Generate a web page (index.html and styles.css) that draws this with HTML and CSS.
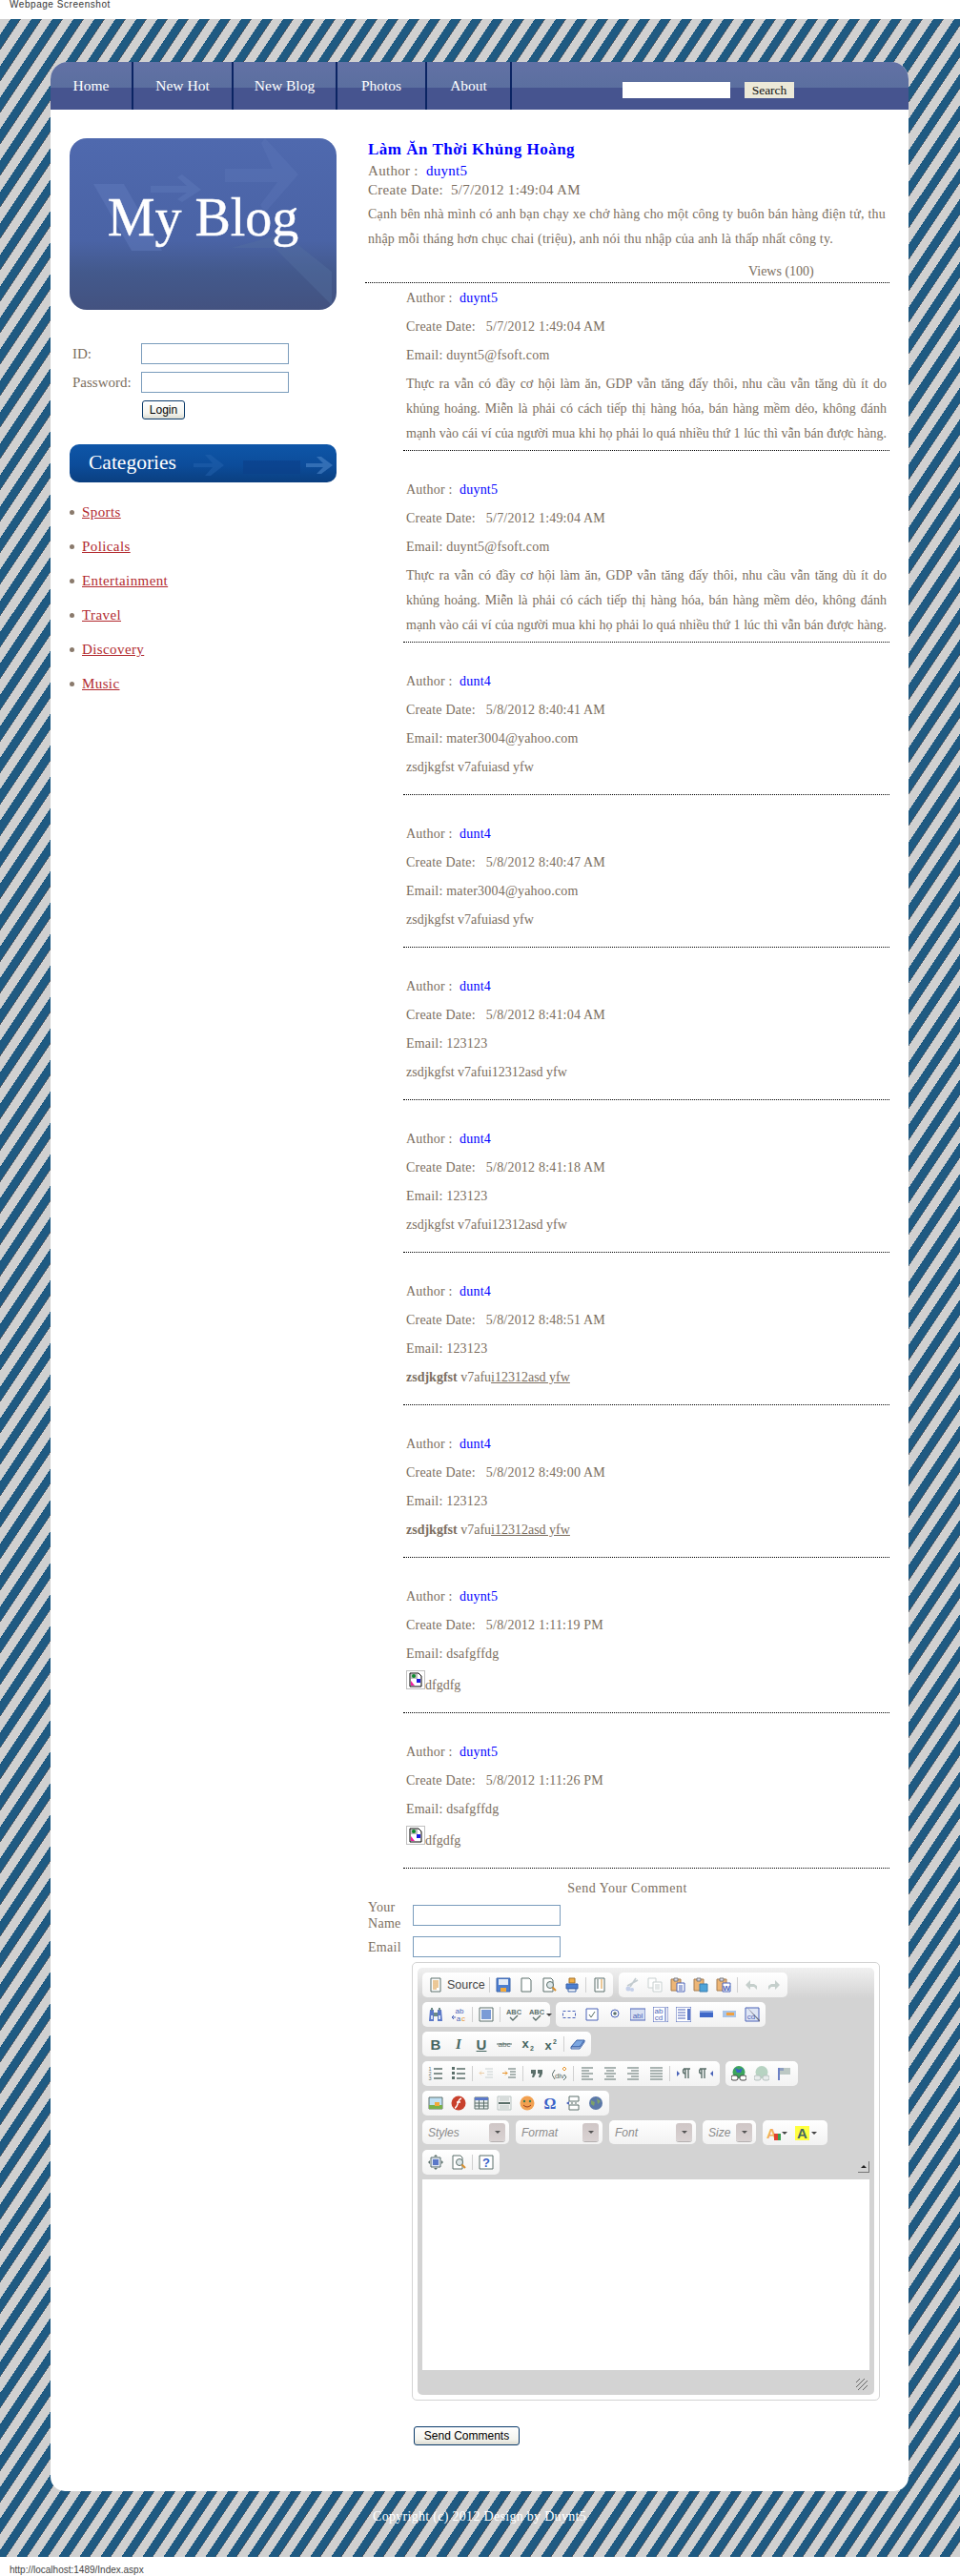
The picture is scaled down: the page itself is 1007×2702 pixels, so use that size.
FILE: index.html
```html
<!DOCTYPE html>
<html lang="vi">
<head>
  <meta charset="UTF-8">
  <title>My Blog</title>
  <link rel="stylesheet" href="styles.css">
</head>
<body>
  <svg class="defs" width="0" height="0">
    <symbol id="i-doc" viewBox="0 0 16 16"><path d="M3 1h10v14H3z" fill="#fff" stroke="#5b6f6a"/><path d="M5 4h6M5 6h6M5 8h6M5 10h6M5 12h4" stroke="#d8902f"/></symbol>
    <symbol id="i-save" viewBox="0 0 16 16"><path d="M1 1h14v14H1z" fill="#4d7fd0" stroke="#3a62a8"/><path d="M3 2h10v6H3z" fill="#e4ecf7"/><path d="M5 11h6v4H5z" fill="#f2a93a"/></symbol>
    <symbol id="i-new" viewBox="0 0 16 16"><path d="M3 1h8l2 2v12H3z" fill="#fff" stroke="#5b6f6a"/></symbol>
    <symbol id="i-preview" viewBox="0 0 16 16"><path d="M2 1h8l2 2v12H2z" fill="#fff" stroke="#5b6f6a"/><circle cx="9" cy="8" r="3.5" fill="#dce6e8" stroke="#5b6f6a"/><path d="M11.5 10.5l3.5 3.5" stroke="#d8902f" stroke-width="2"/></symbol>
    <symbol id="i-print" viewBox="0 0 16 16"><path d="M5 1h6v5H5z" fill="#f2b04a" stroke="#a0702a"/><path d="M2 7h12v5H2z" fill="#4d7fd0" stroke="#3a62a8"/><path d="M4 12h8v3H4z" fill="#fff" stroke="#3a62a8"/></symbol>
    <symbol id="i-tpl" viewBox="0 0 16 16"><path d="M3 1h10v14H3z" fill="#fff" stroke="#5b6f6a"/><path d="M9 3h2M9 5h2M9 7h2M9 9h2M9 11h2" stroke="#d8902f"/><path d="M5 3h2M5 5h2M5 7h2M5 9h2M5 11h2" stroke="#5b6f6a"/></symbol>
    <symbol id="i-cut" viewBox="0 0 16 16"><path d="M12 1L6 10M14 3L3 9" stroke="#c3ccd0" stroke-width="1.6" fill="none"/><circle cx="4" cy="12" r="2.5" fill="#c5d0ea"/><circle cx="8" cy="13" r="2" fill="#c5d0ea"/></symbol>
    <symbol id="i-copy" viewBox="0 0 16 16"><path d="M1 1h8v10H1z" fill="#fff" stroke="#c8d0d0"/><path d="M6 5h9v10H6z" fill="#fff" stroke="#c8d0d0"/><path d="M8 8h5M8 10h5M8 12h5" stroke="#c8d0d0"/></symbol>
    <symbol id="i-paste" viewBox="0 0 16 16"><path d="M1 2h10v12H1z" fill="#eeb676" stroke="#a57d50"/><path d="M4 1h4v3H4z" fill="#dde" stroke="#777"/><path d="M7 6h8v9H7z" fill="#fff" stroke="#4a63b8"/><path d="M9 9h4M9 11h4M9 13h4" stroke="#4a63b8"/></symbol>
    <symbol id="i-pastetext" viewBox="0 0 16 16"><path d="M1 2h10v12H1z" fill="#eeb676" stroke="#a57d50"/><path d="M4 1h4v3H4z" fill="#dde" stroke="#777"/><path d="M7 7h8v8H7z" fill="#4da3d8" stroke="#3b7fb0"/></symbol>
    <symbol id="i-undo" viewBox="0 0 16 16"><path d="M7 3L2 8l5 5V10h4l3 3V9l-3-2H7z" fill="#c5cfcc"/></symbol>
    <symbol id="i-redo" viewBox="0 0 16 16"><path d="M9 3l5 5-5 5V10H5l-3 3V9l3-2h4z" fill="#c5cfcc"/></symbol>
    <symbol id="i-find" viewBox="0 0 16 16"><path d="M2 3h4v12H1zM10 3h4l1 12h-5z" fill="#5b78c8"/><path d="M3 1h2v3H3zM11 1h2v3h-2zM6 6h4v4H6z" fill="#6d8a85"/><path d="M3 9h2v4H3zM11 9h2v4h-2z" fill="#d7e2f5"/></symbol>
    <symbol id="i-selall" viewBox="0 0 16 16"><path d="M1 1h14v14H1z" fill="#fff" stroke="#5b6f6a"/><path d="M3 3h10v10H3z" fill="#7b9bd6"/></symbol>
    <symbol id="i-form" viewBox="0 0 16 16"><path d="M1.5 4.5h13v7h-13z" fill="none" stroke="#4a63b8" stroke-dasharray="3 2"/></symbol>
    <symbol id="i-check" viewBox="0 0 16 16"><path d="M2 2h12v12H2z" fill="#fff" stroke="#4a63b8"/><path d="M5 8l2 3 4-6" stroke="#5b6f6a" fill="none"/></symbol>
    <symbol id="i-radio" viewBox="0 0 16 16"><circle cx="8" cy="7" r="4" fill="#fff" stroke="#4a63b8"/><circle cx="8" cy="7" r="1.8" fill="#5b6f6a"/></symbol>
    <symbol id="i-sel" viewBox="0 0 16 16"><path d="M0 0h16v16H0z" fill="#fff" stroke="#4a63b8"/><path d="M2 3h8M2 6h8M2 9h8M2 12h8" stroke="#4a63b8"/><path d="M12 2h3v12h-3z" fill="#5b78c8"/></symbol>
    <symbol id="i-btn" viewBox="0 0 16 16"><path d="M1 4h14v7H1z" fill="#3f68c8"/><path d="M1 4h14v2H1z" fill="#89a6e0"/></symbol>
    <symbol id="i-imgbtn" viewBox="0 0 16 16"><path d="M1 4h14v7H1z" fill="#a9c5e8"/><path d="M5 6h8v3H5z" fill="#f0a040"/></symbol>
    <symbol id="i-erase" viewBox="0 0 16 16"><path d="M1 11l6-7h8l-5 7z" fill="#7ba6e0" stroke="#3a62a8"/><path d="M1 11h9l5-7v2l-5 7H1z" fill="#c9d8f0" stroke="#3a62a8"/></symbol>
    <symbol id="i-ul" viewBox="0 0 16 16"><path d="M6 3h9M6 8h9M6 13h9" stroke="#5b6f6a" stroke-width="1.3"/><path d="M1 1h3v3H1zM1 6h3v3H1zM1 11h3v3H1z" fill="#5b6f6a"/></symbol>
    <symbol id="i-out" viewBox="0 0 16 16"><path d="M7 3h8M9 6h6M9 9h6M7 12h8" stroke="#c8d0d0"/><path d="M1 7.5h5M1 7.5l2-2M1 7.5l2 2" stroke="#eccfa8" fill="none"/></symbol>
    <symbol id="i-in" viewBox="0 0 16 16"><path d="M7 3h8M9 6h6M9 9h6M7 12h8" stroke="#5b6f6a"/><path d="M1 7.5h5M6 7.5l-2-2M6 7.5l-2 2" stroke="#e8962e" fill="none"/></symbol>
    <symbol id="i-quote" viewBox="0 0 16 16"><path d="M2 4h5v4l-2 4H3l1-4H2zM9 4h5v4l-2 4h-2l1-4H9z" fill="#5b6f6a"/></symbol>
    <symbol id="i-left" viewBox="0 0 16 16"><path d="M2 2h12M2 5h8M2 8h12M2 11h8M2 14h12" stroke="#5b6f6a" stroke-width="1.2"/></symbol>
    <symbol id="i-center" viewBox="0 0 16 16"><path d="M2 2h12M4 5h8M2 8h12M4 11h8M2 14h12" stroke="#5b6f6a" stroke-width="1.2"/></symbol>
    <symbol id="i-right" viewBox="0 0 16 16"><path d="M2 2h12M6 5h8M2 8h12M6 11h8M2 14h12" stroke="#5b6f6a" stroke-width="1.2"/></symbol>
    <symbol id="i-just" viewBox="0 0 16 16"><path d="M2 2h13M2 5h13M2 8h13M2 11h13M2 14h13" stroke="#5b6f6a" stroke-width="1.2"/></symbol>
    <symbol id="i-ltr" viewBox="0 0 16 16"><path d="M1 5l3 3-3 3z" fill="#4a63b8"/><path d="M8 3h7M10 3a2.5 2.5 0 0 0 0 5M10 3v10M13 3v10" stroke="#5b6f6a" stroke-width="1.4" fill="none"/></symbol>
    <symbol id="i-rtl" viewBox="0 0 16 16"><path d="M15 5l-3 3 3 3z" fill="#4a63b8"/><path d="M1 3h7M3 3a2.5 2.5 0 0 0 0 5M3 3v10M6 3v10" stroke="#5b6f6a" stroke-width="1.4" fill="none"/></symbol>
    <symbol id="i-link" viewBox="0 0 16 16"><circle cx="8" cy="6.5" r="6.5" fill="#3ca55c"/><path d="M4 2l4 2 4-2-2 5H6z" fill="#3a62c8"/><rect x="0" y="10" width="7" height="5" rx="2" fill="#fff" stroke="#444"/><rect x="9" y="10" width="7" height="5" rx="2" fill="#fff" stroke="#444"/></symbol>
    <symbol id="i-unlink" viewBox="0 0 16 16"><circle cx="8" cy="6.5" r="6.5" fill="#b7d3c2"/><rect x="0" y="10" width="7" height="5" rx="2" fill="#e8ecec" stroke="#b5bfbd"/><rect x="9" y="10" width="7" height="5" rx="2" fill="#e8ecec" stroke="#b5bfbd"/></symbol>
    <symbol id="i-flag" viewBox="0 0 16 16"><path d="M2 2v13" stroke="#4a63b8" stroke-width="1.6"/><path d="M3 2h11v7H3z" fill="#bcc8c4"/><path d="M3 2h4v3H3z" fill="#4a63b8" opacity=".4"/></symbol>
    <symbol id="i-img" viewBox="0 0 16 16"><path d="M1 2h14v12H1z" fill="#bfe0f4" stroke="#5b6f6a"/><path d="M1 10h14v4H1z" fill="#78b04a"/><path d="M7 7h5v4H7z" fill="#f2a93a"/></symbol>
    <symbol id="i-flash" viewBox="0 0 16 16"><circle cx="8" cy="8" r="7.5" fill="#c8402c"/><path d="M11 3C8 4 8 6 7 9s-2 4-3 4M6 7h4" stroke="#fff" stroke-width="1.4" fill="none"/></symbol>
    <symbol id="i-table" viewBox="0 0 16 16"><path d="M1 2h14v12H1z" fill="#e8eded" stroke="#5b6f6a"/><path d="M1 2h14v3H1z" fill="#5b78c8"/><path d="M5.5 5v9M10.5 5v9M1 8h14M1 11h14" stroke="#5b6f6a"/></symbol>
    <symbol id="i-hr" viewBox="0 0 16 16"><path d="M1 1h14v14H1z" fill="#f2f2f2" stroke="#b9c4c2"/><path d="M3 3h10M3 5h10M3 11h10M3 13h10" stroke="#bcc6c4"/><path d="M2 8h12" stroke="#5b6f6a" stroke-width="2"/></symbol>
    <symbol id="i-smile" viewBox="0 0 16 16"><circle cx="8" cy="8" r="7.5" fill="#f2a050"/><circle cx="5" cy="6" r="1.2" fill="#3a7a50"/><circle cx="11" cy="6" r="1.2" fill="#3a7a50"/><path d="M4 10q4 4 8 0" stroke="#a04020" fill="none"/></symbol>
    <symbol id="i-break" viewBox="0 0 16 16"><path d="M4 1h10v5H4zM4 10h10v5H4z" fill="#fff" stroke="#5b6f6a"/><path d="M1 8l3-2v4z" fill="#4a63b8"/><path d="M6 8h2M10 8h2" stroke="#5b6f6a"/></symbol>
    <symbol id="i-iframe" viewBox="0 0 16 16"><circle cx="8" cy="8" r="7" fill="#5b78a8"/><path d="M3 5l4 2-1 4-3-2zM9 3l4 3-3 3z" fill="#7da06a"/></symbol>
    <symbol id="i-max" viewBox="0 0 16 16"><path d="M3 3h10v10H3z" fill="#dfe6f5" stroke="#5b6f6a"/><path d="M5 5h6v6H5z" fill="#5b78c8"/><path d="M8 0l2 2H6zM8 16l2-2H6zM0 8l2 2V6zM16 8l-2 2V6z" fill="#5b6f6a"/></symbol>
    <symbol id="i-broken" viewBox="0 0 16 16"><path d="M2 1h9l3 3v11H2z" fill="#fff" stroke="#000"/><path d="M3 2h7v5H3z" fill="#c0c0c0"/><circle cx="6" cy="4" r="2" fill="#0a8a2a"/><path d="M3 9l4 5H3z" fill="#f020a0"/><path d="M9 7h4v4H9z" fill="#1a1ae0"/></symbol>
  </svg>

  <div class="shot-title">Webpage Screenshot</div>

  <div class="stripes">
    <div class="card">
      <div class="nav">
        <ul class="menu">
          <li><a href="#">Home</a></li>
          <li><a href="#">New Hot</a></li>
          <li><a href="#">New Blog</a></li>
          <li><a href="#">Photos</a></li>
          <li><a href="#">About</a></li>
        </ul>
        <div class="search">
          <input type="text" class="search-box">
          <button class="search-btn">Search</button>
        </div>
      </div>

      <div class="columns">
        <div class="sidebar">
          <div class="logo">
            <svg class="logo-art" viewBox="0 0 280 180">
              <path d="M205 0l35 38-35 40-5-8 18-24h-55v-14h50l-12-27z" fill="#5f79bb" opacity=".35"/>
              <path d="M85 50h38l-10-9 5-3 20 16-20 13-5-3 10-7H85z" fill="#5f79bb" opacity=".45"/>
              <path d="M25 48h32l40 70H65z" fill="#5f79bb" opacity=".5"/>
              <path d="M170 115h45l60 60v-35l-50-40z" fill="#56709f" opacity=".4"/>
            </svg>
            <span class="logo-text">My Blog</span>
          </div>

          <div class="login">
            <div class="login-row"><label>ID:</label><input type="text" class="field"></div>
            <div class="login-row"><label>Password:</label><input type="password" class="field"></div>
            <button class="btn login-btn">Login</button>
          </div>

          <div class="cat-head">
            <span>Categories</span>
            <svg class="cat-art" viewBox="0 0 280 40">
              <path d="M130 20h20l-8-9h6l14 11-14 11h-6l8-9h-20z" fill="#2a6ab4" opacity=".4"/>
              <path d="M182 17h60v14h-60z" fill="#0b3f88" opacity=".6"/>
              <path d="M248 20h18l-7-7h5l12 9-12 9h-5l7-7h-18z" fill="#4c86c8" opacity=".6"/>
            </svg>
          </div>
          <ul class="cats">
            <li><a href="#">Sports</a></li>
            <li><a href="#">Policals</a></li>
            <li><a href="#">Entertainment</a></li>
            <li><a href="#">Travel</a></li>
            <li><a href="#">Discovery</a></li>
            <li><a href="#">Music</a></li>
          </ul>
        </div>

        <div class="main">
          <div class="post">
            <h1 class="post-title"><a href="#">Làm Ăn Thời Khủng Hoàng</a></h1>
            <div class="post-meta">Author :&nbsp; <a href="#">duynt5</a></div>
            <div class="post-meta">Create Date:&nbsp; 5/7/2012 1:49:04 AM</div>
            <p class="post-text">Cạnh bên nhà mình có anh bạn chạy xe chở hàng cho một công ty buôn bán hàng điện tử, thu nhập mỗi tháng hơn chục chai (triệu), anh nói thu nhập của anh là thấp nhất công ty.</p>
            <div class="views">Views (100)</div>
          </div>

          <div class="comment first">
            <div class="c-row">Author :&nbsp; <a href="#">duynt5</a></div>
            <div class="c-row">Create Date: &nbsp; 5/7/2012 1:49:04 AM</div>
            <div class="c-row">Email: duynt5@fsoft.com</div>
            <div class="c-text long">Thực ra vẫn có đầy cơ hội làm ăn, GDP vẫn tăng đấy thôi, nhu cầu vẫn tăng dù ít do khủng hoảng. Miễn là phải có cách tiếp thị hàng hóa, bán hàng mềm dẻo, không đánh mạnh vào cái ví của người mua khi họ phải lo quá nhiều thứ 1 lúc thì vẫn bán được hàng.</div>
          </div>
          <div class="comment">
            <div class="c-row">Author :&nbsp; <a href="#">duynt5</a></div>
            <div class="c-row">Create Date: &nbsp; 5/7/2012 1:49:04 AM</div>
            <div class="c-row">Email: duynt5@fsoft.com</div>
            <div class="c-text long">Thực ra vẫn có đầy cơ hội làm ăn, GDP vẫn tăng đấy thôi, nhu cầu vẫn tăng dù ít do khủng hoảng. Miễn là phải có cách tiếp thị hàng hóa, bán hàng mềm dẻo, không đánh mạnh vào cái ví của người mua khi họ phải lo quá nhiều thứ 1 lúc thì vẫn bán được hàng.</div>
          </div>
          <div class="comment">
            <div class="c-row">Author :&nbsp; <a href="#">dunt4</a></div>
            <div class="c-row">Create Date: &nbsp; 5/8/2012 8:40:41 AM</div>
            <div class="c-row">Email: mater3004@yahoo.com</div>
            <div class="c-text">zsdjkgfst v7afuiasd yfw</div>
          </div>
          <div class="comment">
            <div class="c-row">Author :&nbsp; <a href="#">dunt4</a></div>
            <div class="c-row">Create Date: &nbsp; 5/8/2012 8:40:47 AM</div>
            <div class="c-row">Email: mater3004@yahoo.com</div>
            <div class="c-text">zsdjkgfst v7afuiasd yfw</div>
          </div>
          <div class="comment">
            <div class="c-row">Author :&nbsp; <a href="#">dunt4</a></div>
            <div class="c-row">Create Date: &nbsp; 5/8/2012 8:41:04 AM</div>
            <div class="c-row">Email: 123123</div>
            <div class="c-text">zsdjkgfst v7afui12312asd yfw</div>
          </div>
          <div class="comment">
            <div class="c-row">Author :&nbsp; <a href="#">dunt4</a></div>
            <div class="c-row">Create Date: &nbsp; 5/8/2012 8:41:18 AM</div>
            <div class="c-row">Email: 123123</div>
            <div class="c-text">zsdjkgfst v7afui12312asd yfw</div>
          </div>
          <div class="comment">
            <div class="c-row">Author :&nbsp; <a href="#">dunt4</a></div>
            <div class="c-row">Create Date: &nbsp; 5/8/2012 8:48:51 AM</div>
            <div class="c-row">Email: 123123</div>
            <div class="c-text"><b>zsdjkgfst</b> v7afu<u>i12312asd yfw</u></div>
          </div>
          <div class="comment">
            <div class="c-row">Author :&nbsp; <a href="#">dunt4</a></div>
            <div class="c-row">Create Date: &nbsp; 5/8/2012 8:49:00 AM</div>
            <div class="c-row">Email: 123123</div>
            <div class="c-text"><b>zsdjkgfst</b> v7afu<u>i12312asd yfw</u></div>
          </div>
          <div class="comment">
            <div class="c-row">Author :&nbsp; <a href="#">duynt5</a></div>
            <div class="c-row">Create Date: &nbsp; 5/8/2012 1:11:19 PM</div>
            <div class="c-row">Email: dsafgffdg</div>
            <div class="c-pic"><span class="broken"><svg><use href="#i-broken"/></svg></span><span class="pic-caption">dfgdfg</span></div>
          </div>
          <div class="comment">
            <div class="c-row">Author :&nbsp; <a href="#">duynt5</a></div>
            <div class="c-row">Create Date: &nbsp; 5/8/2012 1:11:26 PM</div>
            <div class="c-row">Email: dsafgffdg</div>
            <div class="c-pic"><span class="broken"><svg><use href="#i-broken"/></svg></span><span class="pic-caption">dfgdfg</span></div>
          </div>

          <div class="send-head">Send Your Comment</div>
          <div class="send-row"><label>Your Name</label><input type="text" class="field"></div>
          <div class="send-row"><label>Email</label><input type="text" class="field"></div>

          <div class="editor">
            <div class="editor-inner">
              <div class="tb-row">
                <div class="tb-group">
                  <span class="tb-source"><span class="ic"><svg><use href="#i-doc"/></svg></span>Source</span>
                  <i class="sep"></i>
                  <span class="ic"><svg><use href="#i-save"/></svg></span>
                  <span class="ic"><svg><use href="#i-new"/></svg></span>
                  <span class="ic"><svg><use href="#i-preview"/></svg></span>
                  <span class="ic"><svg><use href="#i-print"/></svg></span>
                  <i class="sep"></i>
                  <span class="ic"><svg><use href="#i-tpl"/></svg></span>
                </div>
                <div class="tb-group">
                  <span class="ic"><svg><use href="#i-cut"/></svg></span>
                  <span class="ic"><svg><use href="#i-copy"/></svg></span>
                  <span class="ic"><svg><use href="#i-paste"/></svg></span>
                  <span class="ic"><svg><use href="#i-pastetext"/></svg></span>
                  <span class="ic"><svg viewBox="0 0 16 16"><path d="M1 2h10v12H1z" fill="#eeb676" stroke="#a57d50"/><path d="M4 1h4v3H4z" fill="#dde" stroke="#777"/><path d="M7 6h8v9H7z" fill="#fff" stroke="#4a63b8"/><text x="11" y="14" class="ic-w">W</text></svg></span>
                  <i class="sep"></i>
                  <span class="ic"><svg><use href="#i-undo"/></svg></span>
                  <span class="ic"><svg><use href="#i-redo"/></svg></span>
                </div>
              </div>
              <div class="tb-row">
                <div class="tb-group">
                  <span class="ic"><svg><use href="#i-find"/></svg></span>
                  <span class="ic"><svg viewBox="0 0 16 16"><text x="9" y="7" class="ic-t ic-blue">ab</text><text x="8" y="15" class="ic-t ic-blue">a</text><text x="13" y="15" class="ic-t ic-org">c</text><path d="M1 11h4M1 11l2-2M1 11l2 2" stroke="#4a63b8" fill="none"/></svg></span>
                  <i class="sep"></i>
                  <span class="ic"><svg><use href="#i-selall"/></svg></span>
                  <i class="sep"></i>
                  <span class="ic"><svg viewBox="0 0 16 16"><text x="8" y="8" class="ic-abc">ABC</text><path d="M4 11l3 3 5-5" stroke="#5b6f6a" stroke-width="1.4" fill="none"/></svg></span>
                  <span class="ic wide"><svg viewBox="0 0 16 16"><text x="8" y="8" class="ic-abc">ABC</text><path d="M4 11l3 3 5-5" stroke="#5b6f6a" stroke-width="1.4" fill="none"/></svg><em class="arrow"></em></span>
                </div>
                <div class="tb-group">
                  <span class="ic"><svg><use href="#i-form"/></svg></span>
                  <span class="ic"><svg><use href="#i-check"/></svg></span>
                  <span class="ic"><svg><use href="#i-radio"/></svg></span>
                  <span class="ic"><svg viewBox="0 0 16 16"><path d="M0 2h16v12H0z" fill="#d8e0f2" stroke="#4a63b8"/><text x="8" y="12" class="ic-t ic-blue">abl</text></svg></span>
                  <span class="ic"><svg viewBox="0 0 16 16"><path d="M0 0h16v16H0z" fill="#fff" stroke="#4a63b8"/><text x="6" y="7" class="ic-t ic-blue">ab</text><text x="6" y="14" class="ic-t ic-blue">cd</text><path d="M13 1v14" stroke="#4a63b8"/></svg></span>
                  <span class="ic"><svg><use href="#i-sel"/></svg></span>
                  <span class="ic"><svg><use href="#i-btn"/></svg></span>
                  <span class="ic"><svg><use href="#i-imgbtn"/></svg></span>
                  <span class="ic"><svg viewBox="0 0 16 16"><path d="M1 1h14v14H1z" fill="#dfe6f5" stroke="#4a63b8"/><text x="7" y="13" class="ic-t ic-blue">cd</text><path d="M2 0l14 14v2z" fill="#667"/></svg></span>
                </div>
              </div>
              <div class="tb-row">
                <div class="tb-group">
                  <span class="ic tx"><b>B</b></span>
                  <span class="ic tx"><b class="ital">I</b></span>
                  <span class="ic tx"><b class="under">U</b></span>
                  <span class="ic"><svg viewBox="0 0 16 16"><text x="8" y="11" class="ic-t ic-gr">abc</text><path d="M0 8h16" stroke="#5b6f6a"/></svg></span>
                  <span class="ic"><svg viewBox="0 0 16 16"><text x="6" y="12" class="ic-b">x</text><text x="13" y="15" class="ic-s">2</text></svg></span>
                  <span class="ic"><svg viewBox="0 0 16 16"><text x="6" y="14" class="ic-b">x</text><text x="13" y="8" class="ic-s">2</text></svg></span>
                  <i class="sep"></i>
                  <span class="ic"><svg><use href="#i-erase"/></svg></span>
                </div>
              </div>
              <div class="tb-row">
                <div class="tb-group">
                  <span class="ic"><svg viewBox="0 0 16 16"><path d="M6 3h9M6 8h9M6 13h9" stroke="#5b6f6a" stroke-width="1.3"/><text x="2" y="5" class="ic-n">1</text><text x="2" y="10" class="ic-n">2</text><text x="2" y="15" class="ic-n">3</text></svg></span>
                  <span class="ic"><svg><use href="#i-ul"/></svg></span>
                  <i class="sep"></i>
                  <span class="ic"><svg><use href="#i-out"/></svg></span>
                  <span class="ic"><svg><use href="#i-in"/></svg></span>
                  <i class="sep"></i>
                  <span class="ic"><svg><use href="#i-quote"/></svg></span>
                  <span class="ic"><svg viewBox="0 0 16 16"><path d="M3 4L0 9l3 5M13 9l2 3-3 3" stroke="#5b6f6a" fill="none"/><text x="8" y="13" class="ic-t ic-gr">div</text><path d="M13 1l2 2-2 2-2-2z" fill="none" stroke="#e8962e"/></svg></span>
                  <i class="sep"></i>
                  <span class="ic"><svg><use href="#i-left"/></svg></span>
                  <span class="ic"><svg><use href="#i-center"/></svg></span>
                  <span class="ic"><svg><use href="#i-right"/></svg></span>
                  <span class="ic"><svg><use href="#i-just"/></svg></span>
                  <i class="sep"></i>
                  <span class="ic"><svg><use href="#i-ltr"/></svg></span>
                  <span class="ic"><svg><use href="#i-rtl"/></svg></span>
                </div>
                <div class="tb-group">
                  <span class="ic"><svg><use href="#i-link"/></svg></span>
                  <span class="ic"><svg><use href="#i-unlink"/></svg></span>
                  <span class="ic"><svg><use href="#i-flag"/></svg></span>
                </div>
              </div>
              <div class="tb-row">
                <div class="tb-group">
                  <span class="ic"><svg><use href="#i-img"/></svg></span>
                  <span class="ic"><svg><use href="#i-flash"/></svg></span>
                  <span class="ic"><svg><use href="#i-table"/></svg></span>
                  <span class="ic"><svg><use href="#i-hr"/></svg></span>
                  <span class="ic"><svg><use href="#i-smile"/></svg></span>
                  <span class="ic"><svg viewBox="0 0 16 16"><text x="8" y="14" class="ic-om">Ω</text></svg></span>
                  <span class="ic"><svg><use href="#i-break"/></svg></span>
                  <span class="ic"><svg><use href="#i-iframe"/></svg></span>
                </div>
              </div>
              <div class="tb-row">
                <div class="tb-group combo c-wide"><span>Styles</span><em class="drop"></em></div>
                <div class="tb-group combo c-wide"><span>Format</span><em class="drop"></em></div>
                <div class="tb-group combo c-wide"><span>Font</span><em class="drop"></em></div>
                <div class="tb-group combo c-small"><span>Size</span><em class="drop"></em></div>
                <div class="tb-group colors">
                  <span class="ic tx color-a">A<i class="swatch"></i></span><em class="arrow"></em>
                  <span class="ic tx color-b"><b>A</b></span><em class="arrow"></em>
                </div>
              </div>
              <div class="tb-row">
                <div class="tb-group">
                  <span class="ic"><svg><use href="#i-max"/></svg></span>
                  <span class="ic"><svg><use href="#i-preview"/></svg></span>
                  <i class="sep"></i>
                  <span class="ic"><svg viewBox="0 0 16 16"><path d="M1 1h14v14H1z" fill="#fff" stroke="#5b6f6a"/><text x="8" y="13" class="ic-q">?</text></svg></span>
                </div>
                <span class="collapser"></span>
              </div>
              <div class="edit-area"></div>
              <div class="edit-foot"><span class="grip"></span></div>
            </div>
          </div>

          <button class="btn send-btn">Send Comments</button>
        </div>
      </div>
    </div>
    <div class="copyright">Copyright (c) 2012 Design by Duynt5</div>
  </div>

  <div class="statusbar">http://localhost:1489/Index.aspx</div>
</body>
</html>
```

FILE: styles.css
```css
html, body { margin: 0; padding: 0; background: #fff; }
body { font-family: "Liberation Serif", serif; font-size: 14px; color: #7b6e60; height: 2702px; overflow: hidden; }
a { color: #0000ff; text-decoration: none; }
ul { margin: 0; padding: 0; list-style: none; }
.defs { position: absolute; }

.shot-title { height: 20px; padding-left: 10px; font: 10px/9px "Liberation Sans", sans-serif; letter-spacing: .55px; color: #333; }
.statusbar { height: 20px; padding-left: 10px; font: 10px/28px "Liberation Sans", sans-serif; color: #444; }

.stripes {
  height: 2662px;
  box-sizing: border-box;
  padding: 45px 54px 0 53px;
  background: repeating-linear-gradient(123.7deg, #d0d0d0 0, #d0d0d0 9.2px, #1f5a82 9.2px, #1f5a82 17.6px, #3a4450 17.6px, #6a7078 18.3px);
}
.card { height: 2548px; background: #fff; border-radius: 18px 18px 15px 15px; overflow: hidden; }
.copyright { margin-top: 20px; text-align: center; color: #fff; font-size: 14px; line-height: 14px; letter-spacing: .3px; }

/* top menu */
.nav { height: 50px; display: flex; background: linear-gradient(#6271a5 0, #5b6f9f 27px, #46548f 27px, #46548f 100%); }
.menu { display: grid; grid-template-columns: 87px 105px 109px 94px 89px; }
.menu li { border-right: 2px solid #0b2463; box-sizing: border-box; text-align: center; line-height: 49px; }
.menu a { color: #fff; font-size: 15.5px; }
.search { display: flex; align-items: flex-start; padding: 21px 0 0 116px; }
.search-box { width: 113px; height: 17px; border: 0; padding: 0; background: #fff; }
.search-btn { width: 52px; height: 17px; margin-left: 15px; padding: 0; border: 0; background: #ece9d8; color: #111; font: 13.5px/17px "Liberation Serif", serif; }

.columns { display: flex; }
.sidebar { width: 280px; margin-left: 20px; padding-top: 30px; }
.main { width: 550px; margin-left: 30px; padding-top: 30px; }

/* sidebar */
.logo { position: relative; height: 180px; border-radius: 18px; overflow: hidden; background: linear-gradient(#4f69ae 0, #4a63a5 60%, #43598c 78%, #435280 100%); text-align: center; }
.logo-art { position: absolute; left: 0; top: 0; width: 280px; height: 180px; }
.logo-text { position: relative; color: #fff; font-size: 56px; line-height: 166px; -webkit-text-stroke: .4px #fff; }
.login { padding: 35px 0 0 3px; }
.login-row { display: flex; align-items: center; height: 22px; margin-bottom: 8px; }
.login-row label { width: 72px; font-size: 15px; }
.field { box-sizing: border-box; width: 155px; height: 22px; padding: 0; background: #fff; border: 1px solid #7a9cbc; }
.btn { box-sizing: border-box; padding: 0; height: 20px; border: 1px solid #0a3a6a; border-radius: 3px; background: linear-gradient(#fff 0, #f4f4ee 70%, #dcdcd2 100%); color: #000; font: 12px/18px "Liberation Sans", sans-serif; }
.login-btn { display: block; width: 45px; margin: 1px 0 0 73px; }
.cat-head { position: relative; height: 40px; margin-top: 26px; border-radius: 10px; overflow: hidden; background: linear-gradient(#0e56a8 0, #0c4c9a 55%, #0a3f80 100%); color: #fff; font-size: 21.5px; line-height: 39px; padding-left: 20px; }
.cat-head span { position: relative; z-index: 1; }
.cat-art { position: absolute; left: 0; top: 0; width: 280px; height: 40px; }
.cats { padding-top: 13px; }
.cats li { position: relative; height: 36px; line-height: 36px; padding-left: 13px; }
.cats li::before { content: ""; position: absolute; left: 0; top: 16px; width: 5px; height: 5px; border-radius: 50%; background: #8a7a6c; }
.cats a { color: #b22a2f; text-decoration: underline; font-size: 15px; letter-spacing: .4px; }

/* post */
.post { position: relative; height: 151px; padding-left: 3px; border-bottom: 1px dotted #000; }
.post-title { margin: 0; font-size: 17px; line-height: 24px; font-weight: bold; letter-spacing: .5px; }
.post-meta { font-size: 15px; line-height: 20px; letter-spacing: .3px; margin-top: -2px; padding-top: 2px; }
.post-text { margin: 3px 4px 0 0; line-height: 26px; text-align: justify; font-size: 14px; letter-spacing: .2px; }
.views { position: absolute; left: 402px; top: 131px; font-size: 14px; line-height: 18px; }

.comment { margin-left: 40px; padding: 26px 3px 0; border-bottom: 1px dotted #000; }
.comment.first { padding-top: 1px; }
.c-row { height: 30px; line-height: 30px; letter-spacing: .2px; }
.c-text { line-height: 26px; padding: 2px 0 15px; text-align: justify; }
.c-text.long { padding-bottom: 4px; text-align-last: justify; }
.c-pic { display: flex; box-sizing: border-box; height: 46px; padding-top: 2px; }
.pic-caption { margin-top: 8px; line-height: 16px; }
.broken { box-sizing: border-box; width: 20px; height: 20px; border: 1px solid #c0c0c0; }
.broken svg { display: block; width: 16px; height: 16px; margin: 1px; }

/* comment form */
.send-head { margin-top: 12px; text-align: center; line-height: 18px; font-size: 14px; letter-spacing: .5px; margin-bottom: 2px; }
.send-row { display: flex; align-items: center; padding-left: 3px; margin-bottom: 5px; }
.send-row label { width: 44px; line-height: 17px; letter-spacing: .3px; }
.send-row .field { margin-left: 3px; }

/* editor box */
.editor { box-sizing: border-box; width: 491px; height: 460px; margin: 1px 0 0 49px; padding: 5px; border: 1px solid #d3d3d3; border-radius: 5px; }
.editor-inner { height: 448px; box-sizing: border-box; padding: 5px 5px 0; border-radius: 5px; background: linear-gradient(#f0f0f0 0, #d3d3d3 32px, #d3d3d3 100%); }
.tb-row { display: flex; gap: 6px; margin-bottom: 5px; height: 26px; }
.tb-group { display: flex; align-items: center; padding: 0 2px; border-radius: 5px; background: linear-gradient(#fff, #f2f2f2); font: 12px "Liberation Sans", sans-serif; }
.ic { display: flex; align-items: center; justify-content: center; width: 24px; height: 24px; flex: none; }
.ic svg { width: 16px; height: 16px; display: block; }
.ic.wide { position: relative; }
.ic.wide .arrow { position: absolute; left: 22px; top: 11px; }
.tb-source { display: flex; align-items: center; width: 66px; color: #444; font-size: 12.5px; }
.sep { width: 1px; height: 16px; margin: 0 2px; background: #d0d0d0; flex: none; }
.arrow { display: block; width: 0; height: 0; border: 3px solid transparent; border-top: 3px solid #444; border-bottom: 0; flex: none; }
.tx { color: #456560; font: bold 15px "Liberation Sans", sans-serif; }
.tx .ital { font-style: italic; font-family: "Liberation Serif", serif; }
.tx .under { text-decoration: underline; }

.ic-t { font: 8px "Liberation Sans", sans-serif; text-anchor: middle; }
.ic-blue { fill: #4a63b8; }
.ic-org { fill: #e8962e; }
.ic-gr { fill: #5b6f6a; }
.ic-w { font: bold 8px "Liberation Sans", sans-serif; fill: #4a63b8; text-anchor: middle; }
.ic-abc { font: bold 7.5px "Liberation Sans", sans-serif; fill: #5b6f6a; text-anchor: middle; }
.ic-b { font: bold 13px "Liberation Sans", sans-serif; fill: #456560; text-anchor: middle; }
.ic-s { font: bold 7px "Liberation Sans", sans-serif; fill: #456560; text-anchor: middle; }
.ic-n { font: 5.5px "Liberation Sans", sans-serif; fill: #5b6f6a; text-anchor: middle; }
.ic-om { font: bold 16px "Liberation Serif", serif; fill: #3a62c8; text-anchor: middle; }
.ic-q { font: bold 13px "Liberation Sans", sans-serif; fill: #3a62c8; text-anchor: middle; }

.combo { justify-content: space-between; height: 25px; padding: 0 4px 0 6px; box-sizing: border-box; color: #8a8a8a; font-style: italic; font-size: 12px; margin-right: 1px; }
.c-wide { width: 91px; }
.c-small { width: 56px; }
.drop { display: flex; align-items: center; justify-content: center; width: 17px; height: 19px; border-radius: 3px; background: linear-gradient(#cfc6c6, #d9d2d2); box-shadow: 0 1px 0 #b5b0b0; }
.drop::after { content: ""; border: 3px solid transparent; border-top: 3px solid #555; border-bottom: 0; }
.colors { width: 68px; box-sizing: border-box; }
.color-a { position: relative; width: 14px; margin-left: 2px; color: #f2ae58; justify-content: flex-start; }
.swatch { position: absolute; left: 8px; top: 13px; width: 7px; height: 7px; background: linear-gradient(90deg, #e04030 50%, #3aa050 50%); }
.color-b { width: 15px; height: 15px; margin-left: 8px; background: #ffff40; color: #456560; }
.colors .arrow { margin-left: 2px; }
.collapser { position: relative; box-sizing: border-box; width: 12px; height: 12px; margin: 12px 0 0 auto; border-right: 1px solid #777; border-bottom: 1px solid #777; }
.collapser::after { content: ""; position: absolute; left: 3px; top: 4px; border: 3px solid transparent; border-bottom: 3px solid #222; border-top: 0; }
.edit-area { height: 200px; background: #fff; }
.edit-foot { display: flex; justify-content: flex-end; padding: 9px 2px 0 0; }
.grip { width: 12px; height: 12px; background: repeating-linear-gradient(135deg, transparent 0, transparent 2.5px, #666 2.5px, #666 3.5px); }
.send-btn { display: block; width: 111px; margin: 27px 0 0 51px; }
```
